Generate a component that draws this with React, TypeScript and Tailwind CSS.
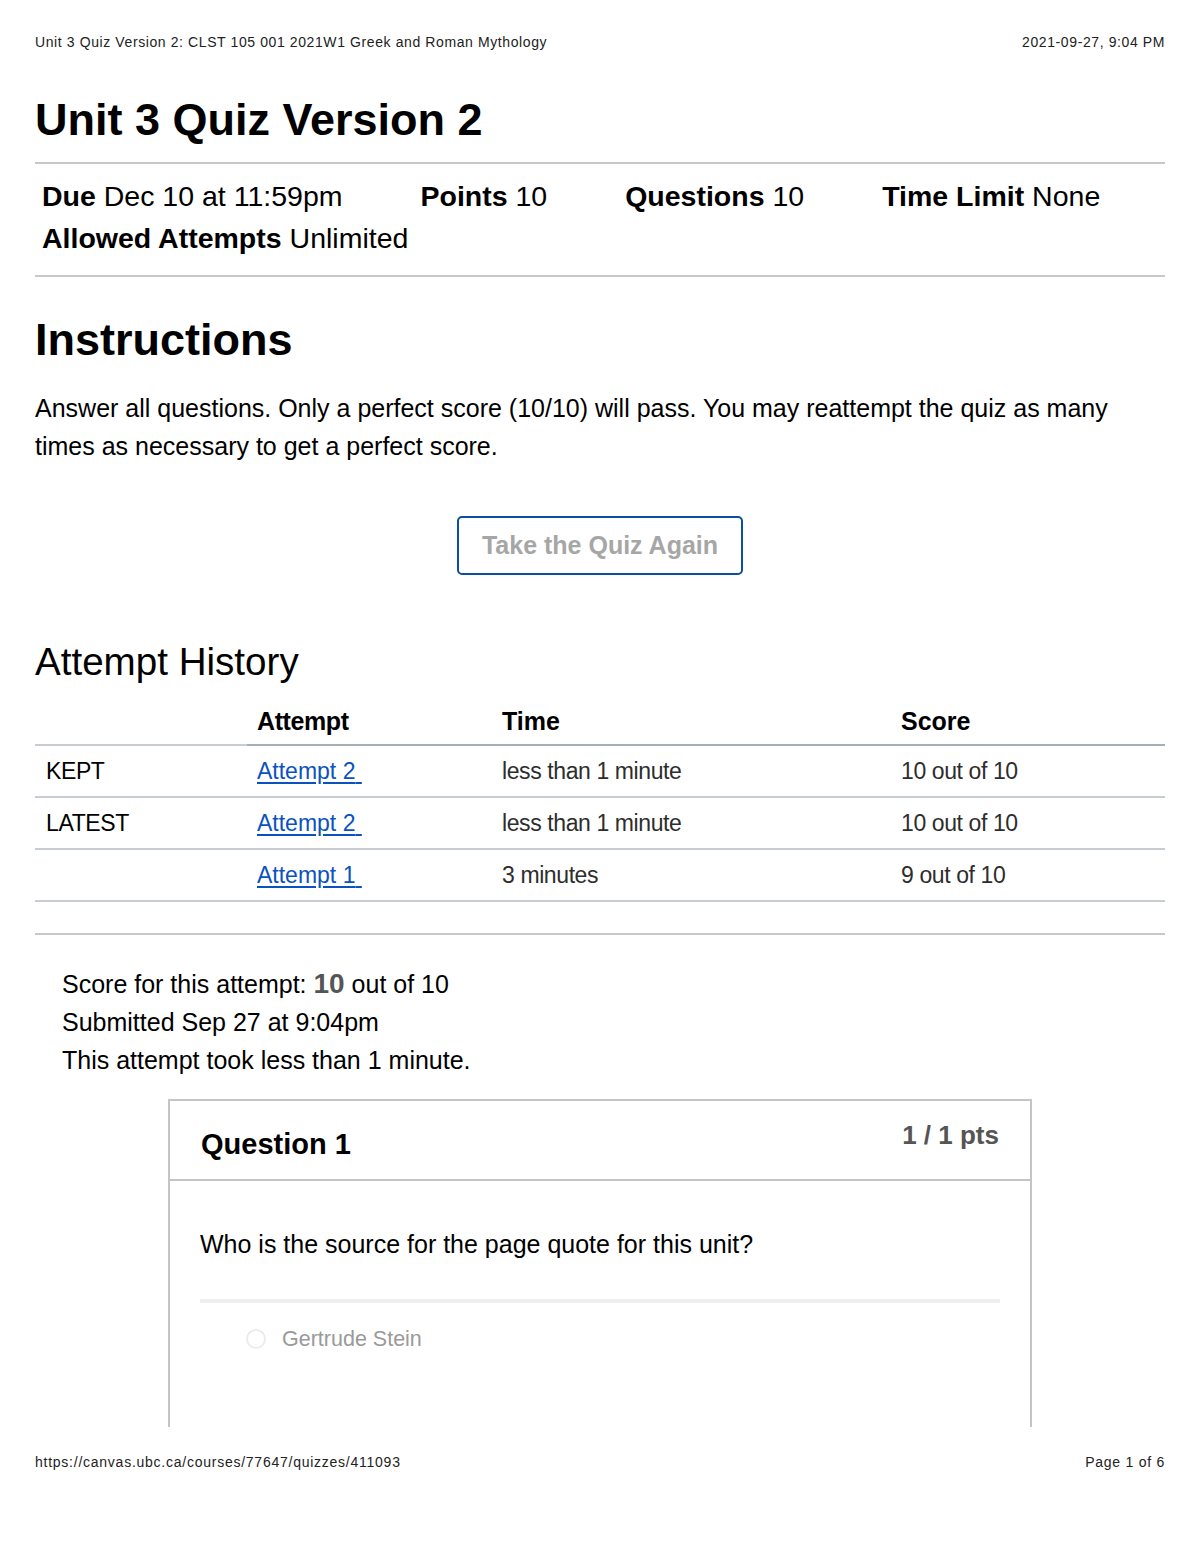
const FONT = { fontFamily: '"Liberation Sans", Arial, Helvetica, sans-serif' };

const DETAILS = [
  { label: 'Due', value: 'Dec 10 at 11:59pm' },
  { label: 'Points', value: '10' },
  { label: 'Questions', value: '10' },
  { label: 'Time Limit', value: 'None' },
  { label: 'Allowed Attempts', value: 'Unlimited' },
];

const ATTEMPTS = [
  { tag: 'KEPT', attempt: 'Attempt 2', time: 'less than 1 minute', score: '10 out of 10' },
  { tag: 'LATEST', attempt: 'Attempt 2', time: 'less than 1 minute', score: '10 out of 10' },
  { tag: '', attempt: 'Attempt 1', time: '3 minutes', score: '9 out of 10' },
];

export default function App() {
  return (
    <div className="min-h-[1553px] w-[1200px] bg-white text-black" style={FONT}>
      <div className="px-[35px]">
        {/* Print header */}
        <div className="mt-[32px] flex h-[20px] items-center justify-between text-[14px] leading-[20px] tracking-[0.6px] text-[#222]">
          <span>Unit 3 Quiz Version 2: CLST 105 001 2021W1 Greek and Roman Mythology</span>
          <span>2021-09-27, 9:04 PM</span>
        </div>

        {/* Title */}
        <h1 className="mt-[42px] text-[45px] font-bold leading-[52px]">Unit 3 Quiz Version 2</h1>
        <div className="mt-[16px] h-[2px] bg-[#c8c8c8]" />

        {/* Quiz details */}
        <div className="flex flex-wrap gap-x-[78px] pl-[7px] pt-[11px] pb-[16px] text-[28.5px] leading-[42px]">
          {DETAILS.map((d) => (
            <div key={d.label}>
              <span className="font-bold">{d.label}</span> {d.value}
            </div>
          ))}
        </div>
        <div className="h-[2px] bg-[#c8c8c8]" />

        {/* Instructions */}
        <h2 className="mt-[37px] text-[45px] font-bold leading-[52px]">Instructions</h2>
        <p className="mt-[23px] text-[25px] leading-[38px]">
          Answer all questions. Only a perfect score (10/10) will pass. You may reattempt the quiz as many times as necessary to get a perfect score.
        </p>

        <div className="mt-[51px] flex justify-center">
          <button className="h-[59px] w-[286px] rounded-[5px] border-[2.5px] border-[#0b4ea2] text-[25px] font-bold text-[#a6a6a6]">
            Take the Quiz Again
          </button>
        </div>

        {/* Attempt history */}
        <h3 className="mt-[65px] text-[38.6px] leading-[44px]">Attempt History</h3>
        <table className="mt-[16px] w-full border-collapse text-left">
          <thead>
            <tr className="text-[25px] font-bold">
              <th className="h-[45px] w-[212px] border-b-2 border-[#c7cdd1]" />
              <th className="w-[245px] border-b-2 border-[#a7afb6] pl-[10px] tracking-[-0.4px]">Attempt</th>
              <th className="w-[399px] border-b-2 border-[#a7afb6] pl-[10px]">Time</th>
              <th className="border-b-2 border-[#a7afb6] pl-[10px]">Score</th>
            </tr>
          </thead>
          <tbody className="text-[23px]">
            {ATTEMPTS.map((a, i) => (
              <tr key={i} className="h-[52px] border-b-2 border-[#c7cdd1]">
                <td className="pl-[11px] tracking-[-0.4px]">{a.tag}</td>
                <td className="pl-[10px]">
                  <a className="text-[#0a52c0] underline underline-offset-[3px]">{a.attempt}&nbsp;</a>
                </td>
                <td className="pl-[10px] tracking-[-0.4px] text-[#2d2d2d]">{a.time}</td>
                <td className="pl-[10px] tracking-[-0.4px] text-[#2d2d2d]">{a.score}</td>
              </tr>
            ))}
          </tbody>
        </table>

        <div className="mt-[31px] h-[2px] bg-[#c8c8c8]" />

        {/* Submission summary */}
        <div className="mt-[30px] pl-[27px] text-[25px] leading-[38px]">
          <div>
            Score for this attempt: <span className="text-[28px] font-bold text-[#555]">10</span> out of 10
          </div>
          <div>Submitted Sep 27 at 9:04pm</div>
          <div>This attempt took less than 1 minute.</div>
        </div>

        {/* Question card (cut by page break) */}
        <div className="mx-auto mt-[20px] h-[328px] w-[864px] overflow-hidden border-2 border-b-0 border-[#c4c4c4]">
          <div className="flex h-[80px] items-start justify-between border-b-2 border-[#c4c4c4] px-[31px] pt-[16px]">
            <div className="mt-[9px] text-[29px] font-bold leading-[36px]">Question 1</div>
            <div className="text-[26px] font-bold leading-[36px] text-[#555]">1 / 1 pts</div>
          </div>
          <div className="px-[30px]">
            <p className="mt-[45px] text-[25px] leading-[36px]">Who is the source for the page quote for this unit?</p>
            <div className="mt-[37px] h-[4px] bg-[#eeeeee]" />
            <div className="mt-[18px] flex h-[36px] items-center pl-[46px]">
              <span className="h-[20px] w-[20px] rounded-full border-2 border-[#ececec]" />
              <span className="ml-[16px] text-[21.5px] text-[#9a9a9a]">Gertrude Stein</span>
            </div>
          </div>
        </div>

        {/* Print footer */}
        <div className="mt-[25px] flex h-[20px] items-center justify-between text-[14px] leading-[20px] tracking-[0.75px] text-[#222]">
          <span>https://canvas.ubc.ca/courses/77647/quizzes/411093</span>
          <span>Page 1 of 6</span>
        </div>
      </div>
    </div>
  );
}
